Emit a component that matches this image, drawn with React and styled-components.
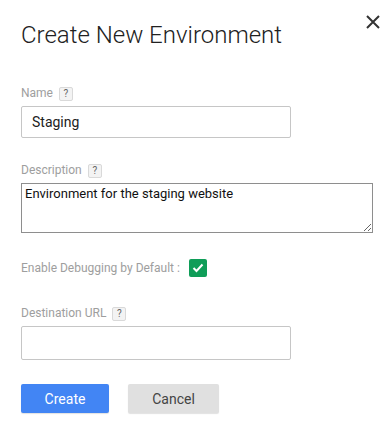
import React from 'react';
import styled, { createGlobalStyle } from 'styled-components';

const GlobalStyle = createGlobalStyle`
  body {
    margin: 0;
    background: #fff;
    font-family: Roboto, "Liberation Sans", Arial, sans-serif;
  }
`;

const Dialog = styled.div`
  position: relative;
  width: 390px;
  height: 431px;
  box-sizing: border-box;
  padding: 19px 21px 0 21px;
  background: #fff;
`;

const Title = styled.h1`
  margin: 0;
  font-size: 24px;
  font-weight: 300;
  color: #212121;
  line-height: 32px;
`;

const Close = styled.button`
  position: absolute;
  top: 12px;
  right: 7px;
  width: 20px;
  height: 20px;
  padding: 0;
  border: 0;
  background: none;
  cursor: pointer;
  display: flex;
  align-items: center;
  justify-content: center;
`;

const Field = styled.div`
  margin-top: ${p => p.$top}px;
  display: flex;
  flex-direction: column;
`;

const Label = styled.label`
  display: flex;
  align-items: center;
  gap: 6px;
  font-size: 12px;
  color: #9e9e9e;
  line-height: 16px;
  margin-bottom: 5px;
`;

const Help = styled.span`
  display: inline-flex;
  align-items: center;
  justify-content: center;
  width: 12px;
  height: 12px;
  border: 1px solid #d9d9d9;
  border-radius: 2px;
  background: #f3f3f3;
  color: #666;
  font-size: 10px;
  line-height: 1;
  margin-top: 2px;
`;

const Input = styled.input`
  box-sizing: border-box;
  width: 270px;
  height: ${p => p.$h || 32}px;
  border: 1px solid #c6c6c6;
  border-radius: 2px;
  padding: 0 10px;
  font-family: inherit;
  font-size: 14px;
  color: #212121;
  outline: none;
`;

const TextArea = styled.textarea`
  box-sizing: border-box;
  width: 352px;
  height: 50px;
  border: 1px solid #8e8e8e;
  padding: 2px 3px;
  font-family: inherit;
  font-size: 13px;
  color: #111;
  line-height: 16px;
  outline: none;
  resize: vertical;
`;

const CheckRow = styled.div`
  margin-top: 26px;
  display: flex;
  align-items: center;
  gap: 9px;
  font-size: 12px;
  color: #9e9e9e;
`;

const Check = styled.span`
  width: 18px;
  height: 18px;
  border-radius: 2px;
  background: #0f9d58;
  display: flex;
  align-items: center;
  justify-content: center;
`;

const Actions = styled.div`
  margin-top: 24px;
  display: flex;
  gap: 19px;
`;

const Button = styled.button`
  height: 29px;
  width: ${p => p.$w}px;
  border: 0;
  border-radius: 2px;
  font-family: inherit;
  font-size: 14px;
  cursor: pointer;
  background: ${p => (p.$primary ? '#4285f4' : '#e0e0e0')};
  color: ${p => (p.$primary ? '#fff' : '#444')};
  box-shadow: 0 1px 1px rgba(0, 0, 0, 0.12);
`;

const App = () => {
  return (
    <>
      <GlobalStyle />
      <Dialog>
        <Title>Create New Environment</Title>
        <Close aria-label="Close">
          <svg width="14" height="14" viewBox="0 0 14 14">
            <path d="M1 1L13 13M13 1L1 13" stroke="#333" strokeWidth="2" />
          </svg>
        </Close>

        <Field $top={34}>
          <Label>Name <Help>?</Help></Label>
          <Input defaultValue="Staging" />
        </Field>

        <Field $top={24}>
          <Label>Description <Help>?</Help></Label>
          <TextArea defaultValue="Environment for the staging website" />
        </Field>

        <CheckRow>
          Enable Debugging by Default :
          <Check>
            <svg width="12" height="10" viewBox="0 0 12 10">
              <path d="M1.5 5L4.5 8L10.5 1.5" stroke="#fff" strokeWidth="2" fill="none" />
            </svg>
          </Check>
        </CheckRow>

        <Field $top={28}>
          <Label>Destination URL <Help>?</Help></Label>
          <Input $h={34} />
        </Field>

        <Actions>
          <Button $primary $w={88}>Create</Button>
          <Button $w={91}>Cancel</Button>
        </Actions>
      </Dialog>
    </>
  );
};

export default App;
